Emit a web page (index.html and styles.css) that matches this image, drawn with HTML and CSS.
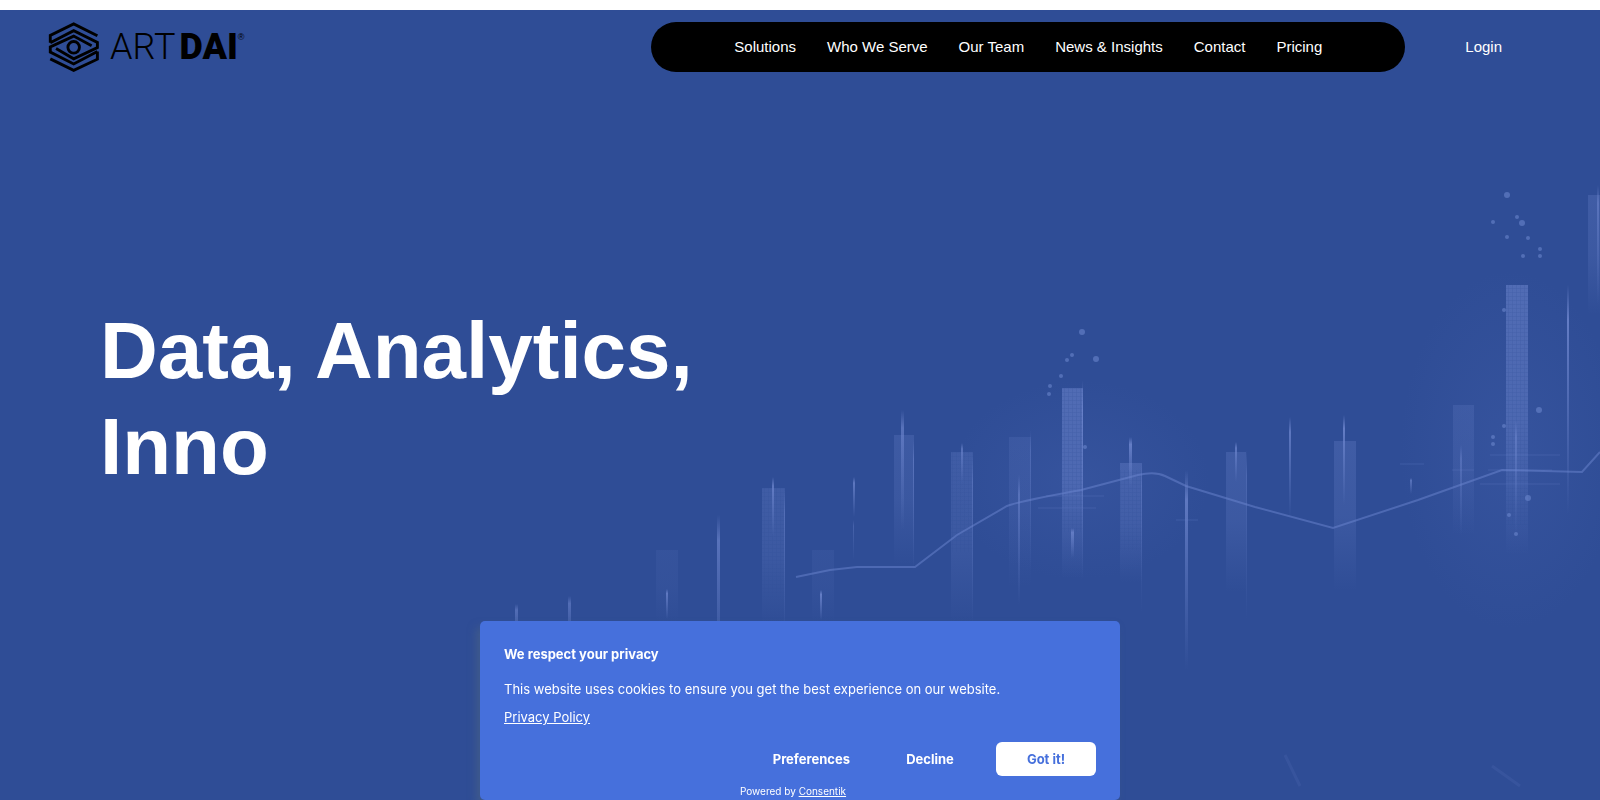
FILE: index.html
```
<!DOCTYPE html>
<html lang="en">
<head>
    <meta charset="UTF-8">
    <title>ARTDAI - Data, Analytics, Innovation</title>
    <meta name="viewport" content="width=device-width, initial-scale=1.0">
    <link rel="stylesheet" href="styles.css">
</head>
<body>
    <div class="hero">
        <!-- Candlestick chart backdrop -->
        <svg class="hero-bg" viewBox="0 10 1600 790" preserveAspectRatio="xMidYMid slice" aria-hidden="true">
            <defs>
                <linearGradient id="fade" x1="0" y1="0" x2="0" y2="1">
                    <stop offset="0" stop-color="#7088d0" stop-opacity="0.65"/>
                    <stop offset="0.5" stop-color="#7088d0" stop-opacity="0.5"/>
                    <stop offset="1" stop-color="#7088d0" stop-opacity="0"/>
                </linearGradient>
                <linearGradient id="glow" x1="0" y1="0" x2="0" y2="1">
                    <stop offset="0" stop-color="#7088d0" stop-opacity="0"/>
                    <stop offset="0.15" stop-color="#7088d0" stop-opacity="0.9"/>
                    <stop offset="1" stop-color="#7088d0" stop-opacity="0"/>
                </linearGradient>
                <radialGradient id="haze">
                    <stop offset="0" stop-color="#4a66b4" stop-opacity="0.25"/>
                    <stop offset="1" stop-color="#4a66b4" stop-opacity="0"/>
                </radialGradient>
                <pattern id="mesh" width="4" height="4" patternUnits="userSpaceOnUse">
                    <path d="M0 0H4M0 0V4" stroke="#2e4c95" stroke-width="1" opacity="0.35"/>
                </pattern>
            </defs>
            <ellipse cx="1080" cy="480" rx="130" ry="100" fill="url(#haze)"/>
            <ellipse cx="1510" cy="450" rx="110" ry="180" fill="url(#haze)"/>
            <g fill="url(#fade)">
                <rect x="656" y="550" width="22" height="72" opacity="0.15"/>
                <rect x="762" y="488" width="23" height="135" opacity="0.4"/>
                <rect x="812" y="550" width="22" height="72" opacity="0.15"/>
                <rect x="894" y="435" width="20" height="130" opacity="0.35"/>
                <rect x="951" y="452" width="22" height="170" opacity="0.4"/>
                <rect x="1009" y="437" width="22" height="150" opacity="0.25"/>
                <rect x="1062" y="388" width="21" height="190" opacity="0.8"/>
                <rect x="1120" y="463" width="22" height="120" opacity="0.5"/>
                <rect x="1226" y="452" width="20" height="140" opacity="0.4"/>
                <rect x="1334" y="441" width="22" height="150" opacity="0.4"/>
                <rect x="1453" y="405" width="21" height="130" opacity="0.3"/>
                <rect x="1506" y="285" width="22" height="270" opacity="0.8"/>
                <rect x="1588" y="195" width="12" height="120" opacity="0.4"/>
            </g>
            <g fill="url(#mesh)">
                <rect x="762" y="488" width="23" height="110"/>
                <rect x="951" y="452" width="22" height="100"/>
                <rect x="1062" y="388" width="21" height="144"/>
                <rect x="1120" y="470" width="22" height="80"/>
                <rect x="1506" y="285" width="22" height="240"/>
            </g>
            <g fill="url(#glow)">
                <rect x="515" y="604" width="3" height="40" opacity="0.6"/>
                <rect x="568" y="596" width="3" height="50" opacity="0.6"/>
                <rect x="666" y="589" width="2" height="30" opacity="0.8"/>
                <rect x="717" y="515" width="3" height="170" opacity="0.7"/>
                <rect x="772" y="477" width="2" height="60" opacity="0.8"/>
                <rect x="784" y="490" width="1" height="150" opacity="0.5"/>
                <rect x="820" y="590" width="2" height="30" opacity="0.9"/>
                <rect x="853" y="477" width="2" height="40" opacity="0.8"/>
                <rect x="853" y="520" width="1" height="40" opacity="0.4"/>
                <rect x="901" y="410" width="3" height="120" opacity="0.7"/>
                <rect x="913" y="440" width="1" height="130" opacity="0.6"/>
                <rect x="961" y="443" width="2" height="40" opacity="0.7"/>
                <rect x="972" y="455" width="1" height="170" opacity="0.5"/>
                <rect x="1018" y="475" width="2" height="130" opacity="0.6"/>
                <rect x="1030" y="430" width="1" height="140" opacity="0.4"/>
                <rect x="1071" y="528" width="3" height="30" opacity="0.8"/>
                <rect x="1082" y="380" width="1" height="200" opacity="0.8"/>
                <rect x="1129" y="437" width="3" height="50" opacity="0.9"/>
                <rect x="1141" y="463" width="1" height="150" opacity="0.4"/>
                <rect x="1185" y="470" width="3" height="200" opacity="0.8"/>
                <rect x="1235" y="442" width="2" height="40" opacity="0.8"/>
                <rect x="1246" y="450" width="1" height="170" opacity="0.5"/>
                <rect x="1289" y="417" width="2" height="100" opacity="0.8"/>
                <rect x="1343" y="415" width="2" height="90" opacity="0.9"/>
                <rect x="1410" y="478" width="2" height="16" opacity="0.7"/>
                <rect x="1460" y="445" width="2" height="90" opacity="0.5"/>
                <rect x="1515" y="420" width="2" height="115" opacity="0.6"/>
                <rect x="1567" y="285" width="2" height="230" opacity="0.9"/>
                <rect x="1597" y="185" width="2" height="120" opacity="0.6"/>
            </g>
            <path class="trend" d="M796 577L830 570L857 567H915L957 535L1007 506Q1020 501 1081 490L1138 475Q1155 471 1165 476L1186 486L1255 507L1333 528L1418 500L1502 470L1582 472L1600 452"/>
            <path class="ticks" d="M1400 464H1424M1452 470H1474M1490 455H1560M1488 470H1552M1480 484H1560M1046 496H1104M1038 508H1096M1176 520H1198"/>
            <g class="dots">
                <circle cx="1082" cy="332" r="3"/>
                <circle cx="1072" cy="355" r="2"/>
                <circle cx="1067" cy="360" r="2"/>
                <circle cx="1096" cy="359" r="3"/>
                <circle cx="1061" cy="376" r="2"/>
                <circle cx="1050" cy="386" r="2"/>
                <circle cx="1049" cy="394" r="2"/>
                <circle cx="1085" cy="447" r="2"/>
                <circle cx="1507" cy="195" r="3"/>
                <circle cx="1493" cy="222" r="2"/>
                <circle cx="1517" cy="217" r="2"/>
                <circle cx="1522" cy="223" r="3"/>
                <circle cx="1507" cy="237" r="2"/>
                <circle cx="1528" cy="238" r="2"/>
                <circle cx="1540" cy="249" r="2"/>
                <circle cx="1540" cy="256" r="2"/>
                <circle cx="1523" cy="256" r="2"/>
                <circle cx="1504" cy="310" r="2"/>
                <circle cx="1539" cy="410" r="3"/>
                <circle cx="1504" cy="426" r="2"/>
                <circle cx="1493" cy="437" r="2"/>
                <circle cx="1493" cy="444" r="2"/>
                <circle cx="1528" cy="498" r="3"/>
                <circle cx="1509" cy="515" r="2"/>
                <circle cx="1516" cy="534" r="2"/>
            </g>
            <path class="streaks" d="M1285 755L1300 786M1492 766L1520 786"/>
        </svg>

        <header class="header">
            <a class="logo" href="#" aria-label="ARTDAI home">
                <svg class="logo-icon" viewBox="14 14 156 156" aria-hidden="true">
                    <path d="M18 79V56L91 20L165 57M18 79L91 41L165 78V94L91 129L36 97M165 106L91 145L18 108V92L91 58L147 88M165 106V130L91 165L18 129"/>
                    <circle cx="91" cy="93" r="18"/>
                </svg>
                <span class="logo-text"><span class="logo-art">ART</span><span class="logo-dai">DAI</span></span>
                <span class="logo-mark">®</span>
            </a>
            <nav class="nav">
                <a href="#">Solutions</a>
                <a href="#">Who We Serve</a>
                <a href="#">Our Team</a>
                <a href="#">News &amp; Insights</a>
                <a href="#">Contact</a>
                <a href="#">Pricing</a>
            </nav>
            <a class="login" href="#">Login</a>
        </header>

        <main class="hero-content">
            <h1>Data, Analytics,<br>Inno</h1>
        </main>
    </div>

    <section class="cookie-banner" aria-labelledby="cookieTitle">
        <h2 id="cookieTitle">We respect your privacy</h2>
        <p>This website uses cookies to ensure you get the best experience on our website.</p>
        <a class="policy" href="#">Privacy Policy</a>
        <div class="cookie-actions">
            <button type="button">Preferences</button>
            <button type="button">Decline</button>
            <button type="button" class="accept">Got it!</button>
        </div>
        <div class="powered">Powered by <a href="#">Consentik</a></div>
    </section>
</body>
</html>
```
FILE: styles.css
```
* {
    box-sizing: border-box;
}
body {
    margin: 0;
    padding-top: 10px;
    background: #fff;
    color: #fff;
    font-family: "Liberation Sans", Arial, sans-serif;
}
a {
    color: inherit;
}
.hero {
    position: relative;
    display: flex;
    flex-direction: column;
    min-height: calc(100vh - 10px);
    background: #2f4d96;
    overflow: hidden;
}
.hero-bg {
    position: absolute;
    inset: 0;
    width: 100%;
    height: 100%;
}
.trend {
    fill: none;
    stroke: #6c86d0;
    stroke-width: 2;
    opacity: 0.5;
}
.ticks {
    stroke: #6c86d0;
    opacity: 0.25;
}
.dots {
    fill: #7590d6;
    opacity: 0.5;
}
.streaks {
    stroke: #5a72bb;
    stroke-width: 3;
    opacity: 0.2;
}

/* Header */
.header {
    position: relative;
    display: flex;
    align-items: center;
    padding: 12px 98px 12px 48px;
}
.logo {
    display: flex;
    align-items: center;
    margin-right: auto;
    color: #000;
    text-decoration: none;
}
.logo-icon {
    width: 52px;
    height: 50px;
    margin-right: 10px;
    fill: none;
    stroke: #000;
    stroke-width: 9;
}
.logo-text {
    display: flex;
    gap: 4px;
    font-family: Roboto, sans-serif;
    font-size: 36px;
    line-height: 50px;
}
.logo-art {
    font-weight: 300;
}
.logo-dai {
    font-weight: 900;
}
.logo-mark {
    align-self: flex-start;
    padding-top: 10px;
    font-size: 9px;
    line-height: 10px;
}
.nav {
    display: flex;
    justify-content: center;
    gap: 31px;
    padding: 0 83px;
    border-radius: 25px;
    background: #000;
}
.nav a, .login {
    font-size: 15px;
    line-height: 50px;
    white-space: nowrap;
    text-decoration: none;
}
.login {
    margin-left: 60px;
}

/* Hero title */
.hero-content {
    position: relative;
    flex: 1;
    display: flex;
    align-items: center;
    padding: 0 100px 86px;
}
h1 {
    margin: 0;
    font-size: 80px;
    line-height: 96px;
    font-weight: bold;
}

/* Cookie banner */
.cookie-banner {
    position: fixed;
    left: 0;
    right: 0;
    bottom: 0;
    width: 640px;
    max-width: 100%;
    margin: 0 auto;
    padding: 23px 24px 0;
    border-radius: 5px;
    background: #4670dc;
    box-shadow: -4px 6px 8px rgba(80, 104, 130, 0.5);
    font-family: Inter, sans-serif;
    font-size: 13px;
    line-height: 20px;
}
.cookie-banner h2 {
    margin: 0 0 15px;
    font-size: 13px;
    line-height: 20px;
    font-weight: 700;
}
.cookie-banner p {
    margin: 0 0 8px;
}
.policy {
    display: block;
    width: max-content;
    margin-bottom: 15px;
}
.cookie-actions {
    display: flex;
    justify-content: flex-end;
    gap: 16px;
}
.cookie-actions button {
    min-width: 100px;
    height: 34px;
    padding: 0 14px;
    border: none;
    border-radius: 6px;
    background: transparent;
    color: #fff;
    font-family: inherit;
    font-size: 13px;
    font-weight: 700;
    cursor: pointer;
}
.cookie-actions .accept {
    background: #fff;
    color: #4670dc;
}
.powered {
    padding: 6px 14px 0 0;
    font-size: 10px;
    line-height: 18px;
    text-align: center;
}
```
